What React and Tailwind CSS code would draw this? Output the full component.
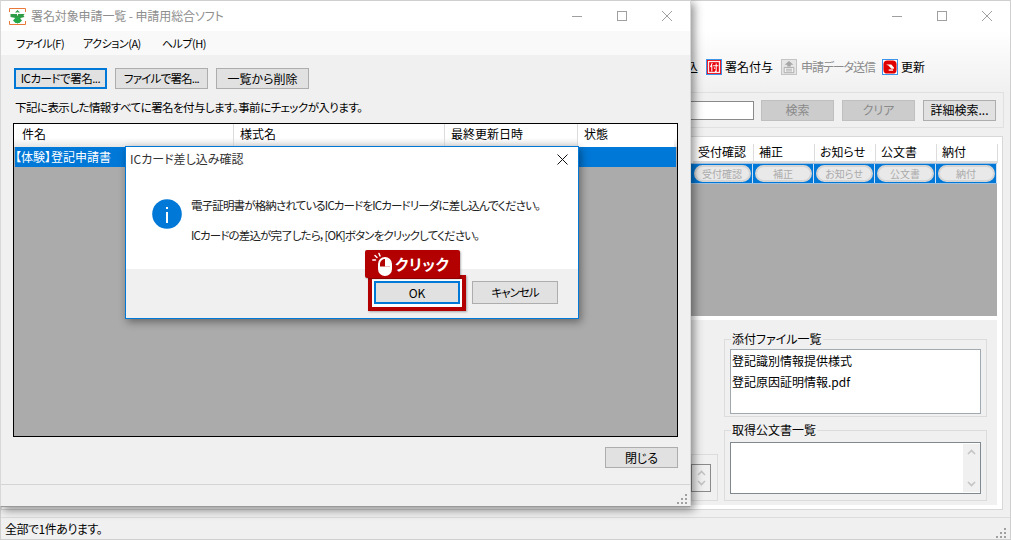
import React from "react";

const Controls = () => (
  <div className="flex items-center gap-[31px] pr-[16px]">
    <svg width="14" height="14" viewBox="0 0 14 14" className="text-[#a0a0a0]"><path d="M2 7.500h10" stroke="currentColor" /></svg>
    <svg width="14" height="14" viewBox="0 0 14 14" className="text-[#a0a0a0]"><rect x="2.500" y="2.500" width="9" height="9" fill="none" stroke="currentColor" /></svg>
    <svg width="14" height="14" viewBox="0 0 14 14" className="text-[#a0a0a0]"><path d="M2 2l10 10M12 2L2 12" stroke="currentColor" /></svg>
  </div>
);

const Btn = ({ children, w, h = "h-[21px]", focus = false, text = "text-[12px]" }) => (
  <div className={`flex items-center justify-center whitespace-nowrap bg-[#e1e1e1] text-black ${focus ? "border-2 border-[#0078d7]" : "border border-[#adadad]"} ${w} ${h} ${text}`}>{children}</div>
);

const Dis = ({ children }) => (
  <div className="flex h-[21px] w-[73px] items-center justify-center border border-[#bfbfbf] bg-[#cccccc] text-[12px] text-[#8a8a8a]">{children}</div>
);

const Grip = ({ cls = "" }) => (
  <svg width="12" height="12" viewBox="0 0 12 12" className={cls}>
    <g fill="#a0a0a0">
      <rect x="8" y="1" width="2" height="2" />
      <rect x="4" y="5" width="2" height="2" />
      <rect x="8" y="5" width="2" height="2" />
      <rect x="0" y="9" width="2" height="2" />
      <rect x="4" y="9" width="2" height="2" />
      <rect x="8" y="9" width="2" height="2" />
    </g>
  </svg>
);

const StampIcon = () => (
  <svg width="14" height="14" viewBox="0 0 16 16" className="box-content border border-[#3b93ea]">
    <rect width="16" height="16" fill="#e8000a" />
    <rect x="1.500" y="1.500" width="13" height="13" fill="#fff" stroke="#fff" />
    <rect x="2.500" y="2.500" width="11" height="11" fill="#e8000a" />
    <path d="M6 3.500L4 8M5.500 6v7M7 6.500h6M10.500 4v9H9M8 8.500l1 1.500" stroke="#fff" strokeWidth="1.200" fill="none" />
  </svg>
);

const UploadIcon = () => (
  <svg width="14" height="14" viewBox="0 0 16 16" className="box-content border border-[#c4c4c4]">
    <rect width="16" height="16" fill="#e6e6e6" />
    <path d="M8 1l5 4.500H10v2H6v-2H3z" fill="#a6a6a6" />
    <path d="M2.500 8.500h11v6h-11z" fill="#f4f4f4" stroke="#a6a6a6" />
    <path d="M4.500 10.500h7M4.500 12.500h7" stroke="#a6a6a6" />
  </svg>
);

const RefreshIcon = () => (
  <svg width="14" height="14" viewBox="0 0 16 16" className="box-content border border-[#3b93ea]">
    <rect width="16" height="16" fill="#fff" />
    <rect x="0.500" y="0.500" width="15" height="15" rx="4.500" fill="#e00000" />
    <path d="M3.500 5h6l3 3.500v1.500h-3l-3-3.500z" fill="#fff" />
    <path d="M6.500 11.500h5" stroke="#fff" strokeWidth="1.500" />
  </svg>
);

const AppIcon = () => (
  <svg width="17" height="17" viewBox="0 0 17 17">
    <rect x="0.500" y="0.500" width="16" height="16" fill="#fff" />
    <path d="M0.500 4V0.500H16.500V4M0.500 13v3.500h16V13" fill="none" stroke="#e8793a" />
    <path d="M8.500 2l2.500 2.500H6z" fill="#2e9b46" />
    <path d="M1.500 6h14l-1 1.500 1 1.500-4 1-3 6-2-6-5-1z" fill="#2e9b46" />
    <path d="M4 12.500l2.500 2.500h4L13 12.500 10 9H7z" fill="#25a84a" />
    <rect x="8" y="4.500" width="1" height="3" fill="#fff" />
  </svg>
);

const Mouse = () => (
  <svg width="22" height="24" viewBox="0 0 22 24">
    <g stroke="#fff" strokeWidth="1.500" strokeLinecap="round">
      <path d="M4 3.500L6 5.500M8 1.500l1 2.500M1.800 8h2.700" />
    </g>
    <rect x="8" y="6" width="12" height="17" rx="6" fill="#b30000" stroke="#fff" strokeWidth="2" />
    <path d="M8.500 14.500h11V17a5.500 5.500 0 01-11 0z" fill="#fff" />
    <path d="M14 6.500a5.500 5.500 0 015.500 5.500v2.500H14z" fill="#fff" />
  </svg>
);

const Pill = ({ children }) => (
  <div className="flex h-[17px] w-[57px] items-center justify-center rounded-full border-2 border-[#d5d5d5] bg-[#e9e9e9] text-[10px] text-[#ababab]">{children}</div>
);

const cols = ["受付確認", "補正", "お知らせ", "公文書", "納付"];

const Spin = ({ cls = "" }) => (
  <div className={`flex flex-col items-center justify-between bg-[#f0f0f0] py-[5px] ${cls}`}>
    <svg width="9" height="6" viewBox="0 0 9 6"><path d="M1 5l3.500-3.500L8 5" fill="none" stroke="#c4c4c4" strokeWidth="1.600" /></svg>
    <svg width="9" height="6" viewBox="0 0 9 6"><path d="M1 1l3.500 3.500L8 1" fill="none" stroke="#c4c4c4" strokeWidth="1.600" /></svg>
  </div>
);

const Group = ({ title, cls, children }) => (
  <div className={`relative border border-[#dcdcdc] ${cls}`}>
    {title ? <span className="absolute left-[6px] top-[-10px] bg-[#f0f0f0] px-[1px] text-[12px] leading-[18px] text-black">{title}</span> : null}
    {children}
  </div>
);

function BackWindow() {
  return (
    <div className="absolute inset-0 flex flex-col border border-[#cfcfcf] bg-[#f0f0f0]">
      <div className="flex h-[30px] shrink-0 items-center justify-end bg-white">
        <Controls />
      </div>
      <div className="flex h-[61px] shrink-0 items-start justify-end bg-gradient-to-b from-white to-[#f0f0f0] pr-[85px] pt-[27px] text-[12px] leading-[18px]">
        <div className="flex items-center whitespace-nowrap">
          <span className="mr-[8px]">込</span>
          <StampIcon />
          <span className="ml-[3px] mr-[8px] w-[48px]">署名付与</span>
          <UploadIcon />
          <span className="ml-[4px] mr-[9px] w-[72px] tracking-[-1.1px] text-[#8b8b8b]">申請データ送信</span>
          <RefreshIcon />
          <span className="ml-[3px] w-[24px]">更新</span>
        </div>
      </div>
      <div className="mr-[6px] flex h-[36px] shrink-0 items-center justify-end border border-[#e0e0e0] pr-[7px]">
        <div className="mr-[7px] h-[19px] w-[70px] border border-[#8a8a8a] bg-white" />
        <div className="flex gap-[8px]">
          <Dis>検索</Dis>
          <Dis>クリア</Dis>
          <Btn w="w-[73px]">詳細検索...</Btn>
        </div>
      </div>
      <div className="mr-[7px] mt-[8px] flex h-[374px] shrink-0 flex-col items-end border border-[#d8d8d8] bg-white pb-[4px] pl-[4px] pr-[5px] pt-[5px]">
        <div className="flex w-[340px] flex-col items-end bg-[#ababab]">
          <div className="flex h-[21px] w-full justify-end bg-white pb-[2px]">
            {cols.map((c) => (
              <div key={c} className="flex w-[61px] shrink-0 items-center pl-[6px] text-[12px] text-black [box-shadow:1px_2px_0_0_#dcdcdc]">{c}</div>
            ))}
          </div>
          <div className="flex h-[21px] w-full justify-end border-y border-[#9dbfe0] bg-[#0078d7]">
            {cols.map((c) => (
              <div key={c} className="flex w-[61px] shrink-0 items-center justify-center border-r border-[#cfe2f5]"><Pill>{c}</Pill></div>
            ))}
          </div>
          <div className="h-[132px] w-full" />
        </div>
        <div className="mt-[4px] flex h-[185px] w-[340px] items-end justify-end gap-[6px] bg-[#f0f0f0] pb-[4px] pr-[10px]">
          <Group cls="flex h-[47px] w-[27px] shrink-0 items-center justify-end pr-[6px]">
            <div className="flex h-[28px] w-[20px] justify-end border border-[#8a8a8a] bg-white"><Spin cls="w-[18px]" /></div>
          </Group>
          <div className="flex w-[263px] shrink-0 flex-col gap-[13px]">
            <Group title="添付ファイル一覧" cls="h-[78px] px-[5px] pt-[9px]">
              <div className="h-[65px] border border-[#a0a8b0] bg-white pl-[1px] text-[12px] leading-[21px] text-black">
                <div>登記識別情報提供様式</div>
                <div>登記原因証明情報.pdf</div>
              </div>
            </Group>
            <Group title="取得公文書一覧" cls="h-[71px] px-[5px] pt-[11px]">
              <div className="flex h-[52px] justify-end border border-[#808890] bg-white"><Spin cls="my-[1px] w-[17px]" /></div>
            </Group>
          </div>
        </div>
      </div>
      <div className="mt-auto flex h-[22px] shrink-0 items-center justify-between border-t border-[#dcdcdc] pl-[4px] pr-[2px] text-[12px] text-black">
        <span className="tracking-[-0.5px]">全部で1件あります。</span>
        <Grip cls="self-end" />
      </div>
    </div>
  );
}

function FrontWindow() {
  return (
    <div className="absolute left-0 top-0 flex h-[507px] w-[691px] flex-col border border-x-[#d8d8d8] border-b-[#9a9a9a] border-t-[#cfcfcf] bg-[#f0f0f0] shadow-[3px_3px_9px_rgba(0,0,0,0.45)]">
      <div className="flex h-[30px] shrink-0 items-center justify-between bg-white pl-[8px]">
        <div className="flex items-center gap-[5px] text-[12px] tracking-[-0.1px] text-[#8e8e8e]"><AppIcon /><span>署名対象申請一覧 - 申請用総合ソフト</span></div>
        <Controls />
      </div>
      <div className="flex h-[24px] shrink-0 items-center bg-[#f9f9f9] pl-[15px] text-[11px] tracking-[-0.5px] text-black">
        <span className="w-[67px]">ファイル(F)</span><span className="w-[79px]">アクション(A)</span><span>ヘルプ(H)</span>
      </div>
      <div className="flex shrink-0 gap-[8px] pl-[13px] pt-[13px]">
        <Btn w="w-[93px]" focus text="text-[11.500px] tracking-[-0.5px]">ICカードで署名...</Btn>
        <Btn w="w-[93px]" text="text-[11.500px] tracking-[-0.8px]">ファイルで署名...</Btn>
        <Btn w="w-[93px]">一覧から削除</Btn>
      </div>
      <div className="shrink-0 pl-[14px] pt-[9px] text-[11.500px] leading-[18px] tracking-[-0.55px] text-black">下記に表示した情報すべてに署名を付与します。事前にチェックが入ります。</div>
      <div className="mx-[12px] mt-[7px] flex h-[314px] shrink-0 flex-col border border-black bg-[#ababab]">
        <div className="flex h-[23px] shrink-0 bg-gradient-to-b from-white from-60% to-[#e6e6e6] text-[12px] text-black">
          <div className="flex w-[220px] items-center border-r border-[#dcdcdc] pb-[3px] pl-[8px]">件名</div>
          <div className="flex w-[211px] items-center border-r border-[#dcdcdc] pb-[3px] pl-[6px]">様式名</div>
          <div className="flex w-[133px] items-center border-r border-[#dcdcdc] pb-[3px] pl-[6px]">最終更新日時</div>
          <div className="flex w-[96px] items-center bg-white pb-[3px] pl-[6px]">状態</div>
        </div>
        <div className="mx-[1px] flex h-[20px] shrink-0 items-center bg-[#0078d7] text-[12px] text-white">【体験】登記申請書</div>
      </div>
      <div className="flex shrink-0 justify-end pr-[12px] pt-[10px]">
        <Btn w="w-[73px]">閉じる</Btn>
      </div>
      <div className="mt-[16px] flex flex-1 items-end justify-end border-t border-[#d4d4d4] pb-[1px] pr-[1px]">
        <Grip />
      </div>
    </div>
  );
}

function Dialog() {
  return (
    <div className="absolute left-[125px] top-[146px] flex h-[173px] w-[454px] flex-col border border-[#0078d7] bg-white shadow-[2px_3px_8px_rgba(0,0,0,0.4)]">
      <div className="flex h-[24px] shrink-0 items-center justify-between pl-[4px] pr-[9px] text-[12px] text-[#333]">
        <span>ICカード差し込み確認</span>
        <svg width="13" height="13" viewBox="0 0 13 13"><path d="M1.500 1.500l10 10M11.500 1.500l-10 10" stroke="#111" strokeWidth="1" /></svg>
      </div>
      <div className="flex h-[98px] shrink-0 pl-[26px] pt-[28px]">
        <svg width="30" height="30" viewBox="0 0 30 30" className="shrink-0">
          <circle cx="15" cy="15" r="14.800" fill="#0078d7" />
          <rect x="14" y="13" width="2" height="11" fill="#fff" />
          <rect x="14" y="8" width="2" height="2" fill="#fff" />
        </svg>
        <div className="whitespace-nowrap pl-[9px] text-[11.500px] leading-[18px] tracking-[-0.85px] text-[#222]">
          <div className="mt-[-3px]">電子証明書が格納されているICカードをICカードリーダに差し込んでください。</div>
          <div className="pt-[12px]">ICカードの差込が完了したら，[OK]ボタンをクリックしてください。</div>
        </div>
      </div>
      <div className="flex flex-1 justify-end gap-[12px] bg-[#f0f0f0] pr-[20px] pt-[12px]">
        <div className="relative h-[23px]">
          <div className="absolute -bottom-[7px] -left-[6px] -right-[6px] -top-[6px] border-4 border-[#b30000] bg-white shadow-[1px_1px_2px_rgba(0,0,0,0.3)]" />
          <Btn w="relative w-[86px]" h="h-[23px]" focus>OK</Btn>
          <div className="absolute left-[-9px] top-[-31px] flex h-[28px] w-[95px] items-center gap-[2px] rounded-[2px] bg-[#b30000] pl-[6px] text-[15px] font-bold tracking-[0.5px] text-white shadow-[1px_1px_2px_rgba(0,0,0,0.3)]">
            <Mouse /><span>クリック</span>
          </div>
        </div>
        <Btn w="w-[86px]" h="h-[23px]" text="text-[11.500px] tracking-[-1px]">キャンセル</Btn>
      </div>
    </div>
  );
}

export default function App() {
  return (
    <div className="relative h-[540px] w-[1011px] overflow-hidden bg-[#f0f0f0] font-['Noto_Sans_CJK_JP','Noto_Sans',sans-serif] [font-feature-settings:'palt']">
      <BackWindow />
      <FrontWindow />
      <Dialog />
    </div>
  );
}
